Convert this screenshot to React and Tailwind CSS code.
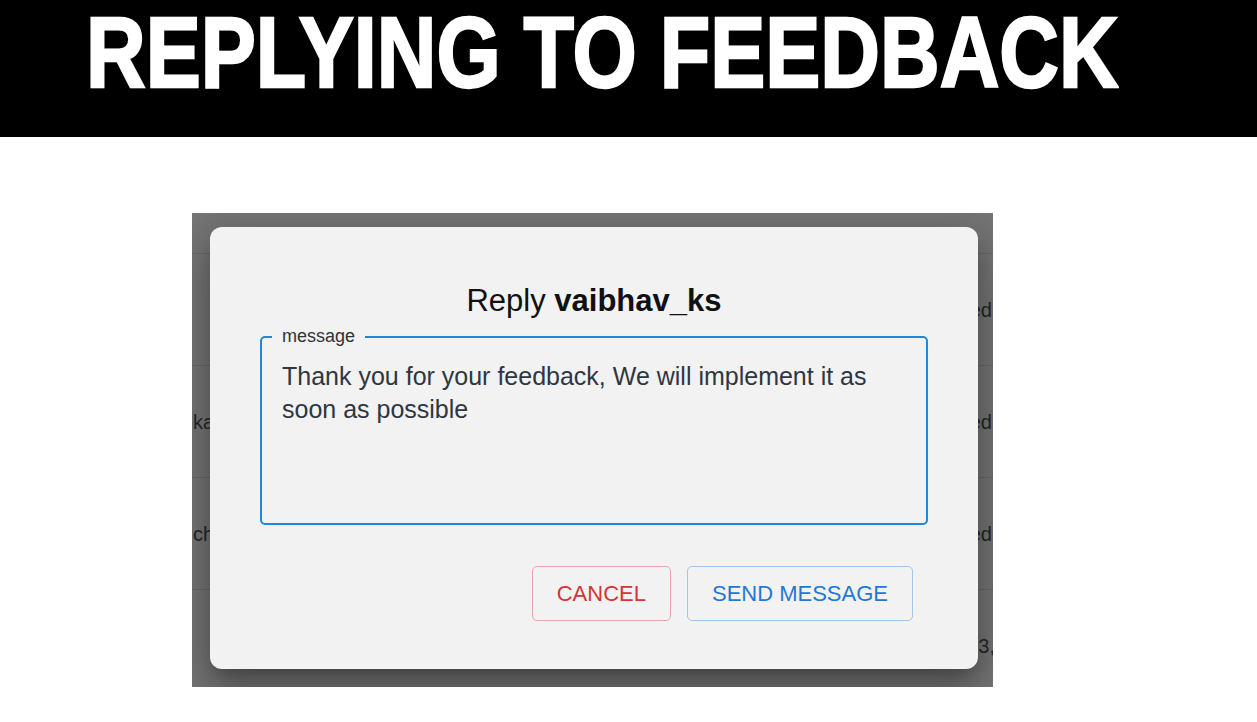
import React from 'react';

const rows = [
  { h: 'h-[41px]', left: '', right: '' },
  { h: 'h-[112px]', left: '', right: 'Resolved' },
  { h: 'h-[112px]', left: 'kartik', right: 'Resolved' },
  { h: 'h-[112px]', left: 'chirag', right: 'Resolved' },
  { h: 'h-[112px]', left: '', right: 'Mar 13, 2023', last: true },
];

function BackdropTable() {
  return (
    <div className="flex flex-col">
      {rows.map((r, i) => (
        <div
          key={i}
          className={`${r.h} shrink-0 flex items-center justify-between border-b border-[#6a6a6a] text-[20px] text-[#262626]`}
        >
          <span className="pl-px whitespace-nowrap">{r.left}</span>
          <span className={`whitespace-nowrap ${r.last ? '-mr-[52px]' : 'pr-px'}`}>{r.right}</span>
        </div>
      ))}
    </div>
  );
}

function ReplyDialog() {
  return (
    <div className="absolute left-[18px] top-[14px] w-[768px] rounded-[12px] bg-[#f2f2f2] px-[50px] pt-[56px] pb-[48px] shadow-[0_11px_15px_-7px_rgba(0,0,0,0.25),0_24px_38px_3px_rgba(0,0,0,0.18),0_9px_46px_8px_rgba(0,0,0,0.16)]">
      <h2 className="text-center text-[31px] leading-[36px] text-[#111]">
        Reply <span className="font-bold">vaibhav_ks</span>
      </h2>

      <div className="relative mt-[17px] h-[189px] rounded-[5px] border-2 border-[#1e88d9] pl-[20px] pr-[18px] pt-[22px]">
        <span className="absolute left-[10px] top-[-11px] bg-[#f2f2f2] px-[10px] text-[18px] leading-[18px] text-[#333]">
          message
        </span>
        <p className="text-[25px] leading-[33px] text-[#2f3641]">
          Thank you for your feedback, We will implement it as soon as possible
        </p>
      </div>

      <div className="mt-[41px] mr-[15px] flex justify-end gap-[16px]">
        <button className="h-[55px] rounded-[5px] border border-[#eaa6a6] px-[24px] text-[22px] text-[#d43535]">
          CANCEL
        </button>
        <button className="h-[55px] rounded-[5px] border border-[#a2c5ee] px-[24px] text-[22px] text-[#1f78d6]">
          SEND MESSAGE
        </button>
      </div>
    </div>
  );
}

export default function App() {
  return (
    <div className="min-h-[722px] w-[1257px] overflow-hidden bg-white font-['Liberation_Sans',Arial,sans-serif]">
      <header className="h-[137px] bg-black pl-[86px] pt-[2px]">
        <h1 className="origin-top scale-y-[1.21] text-[82.6px] font-bold leading-[83px] text-white whitespace-nowrap [-webkit-text-stroke:2px_#fff]">
          REPLYING TO FEEDBACK
        </h1>
      </header>

      <div className="ml-[192px] mt-[76px] relative h-[474px] w-[801px] overflow-hidden bg-[#767676]">
        <BackdropTable />
        <ReplyDialog />
      </div>
    </div>
  );
}
